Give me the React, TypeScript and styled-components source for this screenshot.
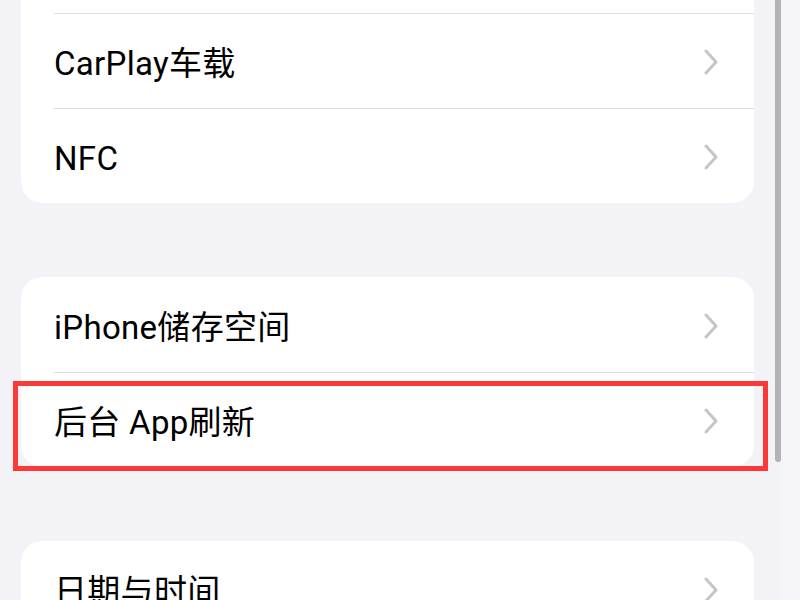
import React from "react";
import styled, { createGlobalStyle } from "styled-components";

const GlobalStyle = createGlobalStyle`
  html, body {
    margin: 0;
    padding: 0;
    background: #f2f2f7;
  }
  body {
    font-family: "Roboto", "Noto Sans CJK SC", sans-serif;
    -webkit-font-smoothing: antialiased;
  }
`;

const Page = styled.div`
  position: relative;
  width: 800px;
  height: 600px;
  overflow: hidden;
  background: #f2f2f7;
`;

const Content = styled.div`
  display: flex;
  flex-direction: column;
  gap: 74px;
  margin-top: -82px;
  padding: 0 46px 0 21px;
`;

const Card = styled.section`
  background: #ffffff;
  border-radius: 22px;
  display: flex;
  flex-direction: column;
`;

const Row = styled.div`
  position: relative;
  padding-left: 33px;
`;

const RowBody = styled.div<{ $divider: boolean }>`
  display: flex;
  align-items: center;
  justify-content: space-between;
  height: 95px;
  box-sizing: border-box;
  padding: 2px 36px 0 0;
  border-top: ${(p) => (p.$divider ? "1px solid #dedee2" : "1px solid transparent")};
`;

const Label = styled.span`
  font-size: 33px;
  line-height: 40px;
  padding-top: 4px;
  color: #000000;
  letter-spacing: 0.3px;
  white-space: nowrap;
`;

const Highlight = styled.div`
  position: absolute;
  top: 9px;
  bottom: -4px;
  left: -8px;
  right: -14px;
  border: 5px solid #fc3838;
  pointer-events: none;
`;

const ScrollTrack = styled.div`
  position: absolute;
  top: 0;
  right: 0;
  width: 19px;
  height: 100%;
  background: #f5f5f7;
`;

const ScrollThumb = styled.div`
  position: absolute;
  top: -20px;
  left: 775px;
  width: 6px;
  height: 482px;
  border-radius: 3px;
  background: #b2b2b7;
`;

const Chevron = () => (
  <svg width="14" height="26" viewBox="0 0 14 26" fill="none">
    <path
      d="M2 2 L12 13 L2 24"
      stroke="#c4c4c9"
      strokeWidth="3"
      strokeLinecap="round"
      strokeLinejoin="round"
    />
  </svg>
);

type Item = { label: string; highlight?: boolean };

const groups: Item[][] = [
  [{ label: "" }, { label: "CarPlay车载" }, { label: "NFC" }],
  [{ label: "iPhone储存空间" }, { label: "后台 App刷新", highlight: true }],
  [{ label: "日期与时间" }, { label: "键盘" }],
];

export default function App() {
  return (
    <Page>
      <GlobalStyle />
      <Content>
        {groups.map((items, gi) => (
          <Card key={gi}>
            {items.map((item, i) => (
              <Row key={`${gi}-${i}`}>
                <RowBody $divider={i > 0}>
                  <Label>{item.label}</Label>
                  <Chevron />
                </RowBody>
                {item.highlight && <Highlight />}
              </Row>
            ))}
          </Card>
        ))}
      </Content>
      <ScrollTrack />
      <ScrollThumb />
    </Page>
  );
}
